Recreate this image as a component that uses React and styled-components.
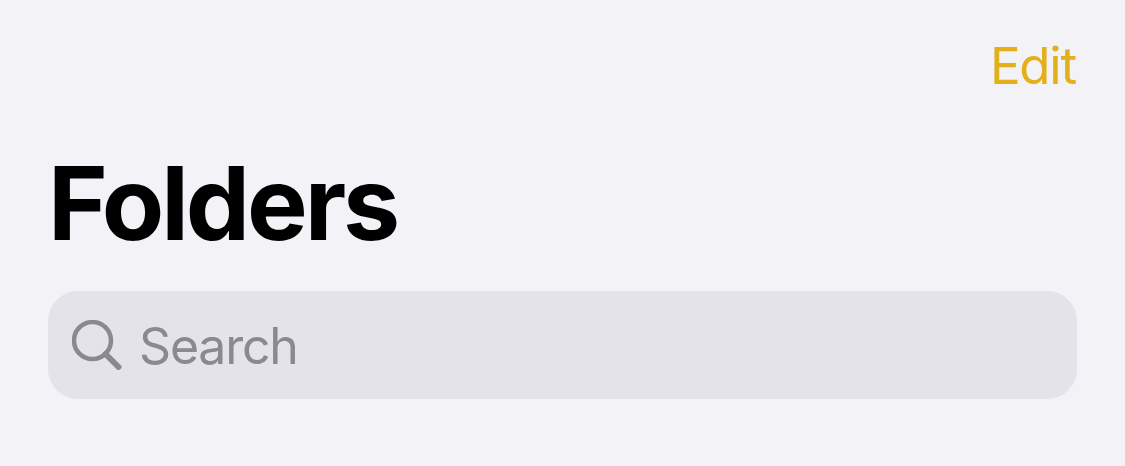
import React from "react";
import styled, { createGlobalStyle } from "styled-components";

const GlobalStyle = createGlobalStyle`
  html, body {
    margin: 0;
    padding: 0;
    background-color: #f2f2f7;
  }
`;

const Screen = styled.div`
  width: 1125px;
  height: 466px;
  box-sizing: border-box;
  padding: 0 48px;
  overflow: hidden;
  background-color: #f2f2f7;
  font-family: Inter, "Liberation Sans", sans-serif;
  display: flex;
  flex-direction: column;
`;

const TopBar = styled.div`
  display: flex;
  justify-content: flex-end;
  padding-top: 39px;
  height: 54px;
`;

const EditButton = styled.span`
  margin-right: 1px;
  font-size: 51px;
  line-height: 54px;
  letter-spacing: -1.2px;
  color: #e1b01a;
`;

const Title = styled.h1`
  margin: 52px 0 0;
  font-size: 102px;
  line-height: 116px;
  font-weight: 700;
  letter-spacing: -3.1px;
  color: #000;
`;

const SearchBar = styled.div`
  margin-top: 30px;
  height: 108px;
  border-radius: 30px;
  background-color: #e3e3e9;
  display: flex;
  align-items: center;
  gap: 17px;
  padding: 0 24px;
`;

const SearchLabel = styled.span`
  padding-top: 2px;
  font-size: 50px;
  letter-spacing: -1.2px;
  color: #8a8a8e;
`;

export default function App() {
  return (
    <>
      <GlobalStyle />
      <Screen>
        <TopBar>
          <EditButton>Edit</EditButton>
        </TopBar>
        <Title>Folders</Title>
        <SearchBar>
          <svg width="50" height="50" viewBox="0 0 50 50" fill="none">
            <circle cx="20.5" cy="20.5" r="18.5" stroke="#8a8a8e" strokeWidth="4.5" />
            <path d="M33.5 34 L46.5 47" stroke="#8a8a8e" strokeWidth="6" strokeLinecap="round" />
          </svg>
          <SearchLabel>Search</SearchLabel>
        </SearchBar>
      </Screen>
    </>
  );
}
